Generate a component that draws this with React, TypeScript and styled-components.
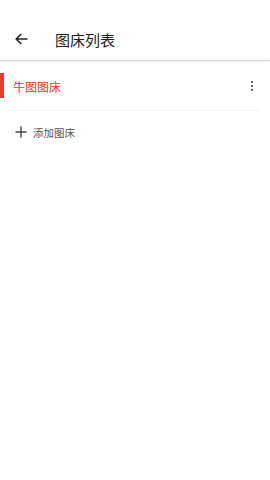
import styled, { createGlobalStyle } from "styled-components";

const GlobalStyle = createGlobalStyle`
  html, body {
    margin: 0;
    padding: 0;
    background: #ffffff;
    font-family: Roboto, "Noto Sans CJK SC", sans-serif;
  }
`;

const Page = styled.div`
  width: 270px;
  height: 480px;
  background: #ffffff;
  display: flex;
  flex-direction: column;
`;

const Header = styled.header`
  height: 61px;
  box-sizing: border-box;
  padding-top: 18px;
  display: flex;
  align-items: center;
  border-bottom: 1px solid #dcdcdc;
  box-shadow: 0 1px 2px rgba(0, 0, 0, 0.1);
`;

const BackButton = styled.div`
  width: 13px;
  height: 12px;
  margin-left: 15px;
  display: flex;
  align-items: center;
  justify-content: center;
`;

const Title = styled.h1`
  margin: 0 0 0 27px;
  font-size: 15px;
  font-weight: 400;
  color: #222222;
`;

const Item = styled.div`
  position: relative;
  height: 48px;
  margin: 1px 10px 0 7px;
  padding: 0 5px 0 6px;
  display: flex;
  align-items: center;
  border-bottom: 1px solid #f3f3f3;
`;

const ActiveBar = styled.span`
  position: absolute;
  left: -7px;
  top: 11px;
  width: 3.5px;
  height: 25px;
  background: #e53935;
`;

const ItemName = styled.span<{ $active?: boolean }>`
  flex: 1;
  font-size: 12px;
  color: ${(p) => (p.$active ? "#e0362f" : "#333333")};
`;

const Kebab = styled.div`
  display: flex;
  flex-direction: column;
  gap: 1.5px;
  align-items: center;
  width: 6px;
`;

const Dot = styled.span`
  width: 2.5px;
  height: 2.5px;
  border-radius: 50%;
  background: #333333;
`;

const AddRow = styled.div`
  height: 42px;
  display: flex;
  align-items: center;
  padding-left: 15px;
  gap: 6px;
`;

const AddText = styled.span`
  font-size: 10.5px;
  color: #555555;
`;

export default function App() {
  return (
    <Page>
      <GlobalStyle />
      <Header>
        <BackButton>
          <svg width="13" height="12" viewBox="0 0 13 12" fill="none">
            <path d="M12.5 6H1.2M6.2 1L1.2 6l5 5" stroke="#222" strokeWidth="1.5" />
          </svg>
        </BackButton>
        <Title>图床列表</Title>
      </Header>
      <Item>
        <ActiveBar />
        <ItemName $active>牛图图床</ItemName>
        <Kebab>
          <Dot />
          <Dot />
          <Dot />
        </Kebab>
      </Item>
      <AddRow>
        <svg width="12" height="12" viewBox="0 0 12 12" fill="none">
          <path d="M6 0.5v11M0.5 6h11" stroke="#444" strokeWidth="1.4" />
        </svg>
        <AddText>添加图床</AddText>
      </AddRow>
    </Page>
  );
}
